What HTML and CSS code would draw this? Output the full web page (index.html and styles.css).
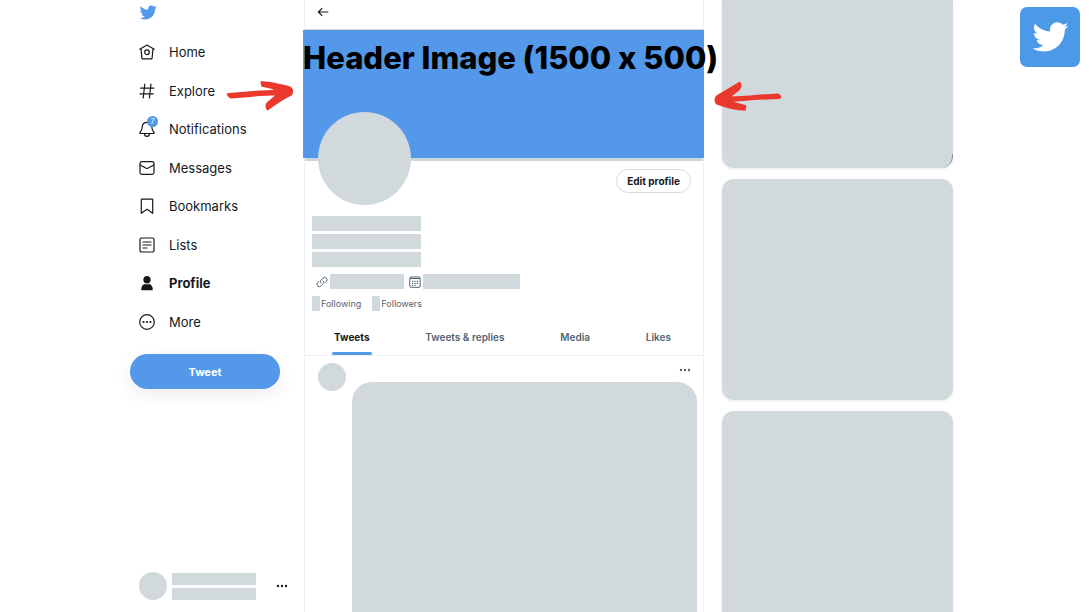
FILE: index.html
```html
<!DOCTYPE html>
<html lang="en">
<head>
<meta charset="utf-8">
<meta name="viewport" content="width=device-width, initial-scale=1">
<title>Profile header size guide</title>
<link rel="stylesheet" href="styles.css">
</head>
<body>
<svg class="defs" aria-hidden="true">
  <symbol id="bird" viewBox="0 2 24 20"><path d="M23.643 4.937c-.835.37-1.732.62-2.675.733.962-.576 1.7-1.49 2.048-2.578-.9.534-1.897.922-2.958 1.13-.85-.904-2.06-1.47-3.4-1.47-2.572 0-4.658 2.086-4.658 4.66 0 .364.042.718.12 1.06-3.873-.195-7.304-2.05-9.602-4.868-.4.69-.63 1.49-.63 2.342 0 1.616.823 3.043 2.072 3.878-.764-.025-1.482-.234-2.11-.583v.06c0 2.257 1.605 4.14 3.737 4.568-.392.106-.803.162-1.227.162-.3 0-.593-.028-.877-.082.593 1.85 2.313 3.198 4.352 3.234-1.595 1.25-3.604 1.995-5.786 1.995-.376 0-.747-.022-1.112-.065 2.062 1.323 4.51 2.093 7.14 2.093 8.57 0 13.255-7.098 13.255-13.254 0-.2-.005-.402-.014-.602.91-.658 1.7-1.477 2.323-2.41z"/></symbol>
  <symbol id="dots" viewBox="0 0 12 4"><circle cx="2" cy="2" r="1.2"/><circle cx="6" cy="2" r="1.2"/><circle cx="10" cy="2" r="1.2"/></symbol>
</svg>
<div class="page">
  <header class="sidebar">
    <a class="brand" href="#" aria-label="Twitter"><svg><use href="#bird"/></svg></a>
    <nav class="nav" aria-label="Primary">
      <a href="#"><svg viewBox="0 0 16 16"><path d="M.8 5.3 8 1.1l7.2 4.2M2 4.8l.9 9.3q.1.7.8.7h8.6q.7 0 .8-.7L14 4.8"/><circle cx="8" cy="8.2" r="2.3"/></svg>Home</a>
      <a href="#"><svg viewBox="0 0 16 16"><path d="M5.8 1 4.2 15M12 1l-1.6 14M1.6 5.1h13.2M1 10.9h13.2"/></svg>Explore</a>
      <a href="#"><span class="bell"><svg viewBox="0 0 16 16"><path d="M8 1.3c-2.8 0-4.6 1.9-4.8 4.7-.2 3-.7 4-1.9 5-.8.7-.5 1.500.4 1.500h12.600c.9 0 1.200-.8.4-1.500-1.200-1-1.700-2-1.900-5C12.600 3.200 10.800 1.300 8 1.300M5.500 12.700c0 1.600 1 2.600 2.500 2.600s2.500-1 2.500-2.600"/></svg><span class="badge">7</span></span>Notifications</a>
      <a href="#"><svg viewBox="0 0 16 16"><rect x="1" y="1.600" width="14" height="12.800" rx="1.800"/><path d="m1.200 5 6 3.300q.8.400 1.600 0l6-3.300"/></svg>Messages</a>
      <a href="#"><svg viewBox="0 0 16 16"><path d="M2.300 1.800q0-.6.6-.6h10.200q.6 0 .6.600v13.500L8 11.300l-5.700 4z"/></svg>Bookmarks</a>
      <a href="#"><svg viewBox="0 0 16 16"><rect x="1" y="1" width="14" height="14" rx="1.600"/><path d="M4 5h8M4 8h8M4 11h4"/></svg>Lists</a>
      <a href="#" class="current" aria-current="page"><svg viewBox="0 0 16 16"><path class="solid" d="M8 1c2.200 0 3.700 1.600 3.700 3.700S10.200 8.600 8 8.600 4.300 6.800 4.300 4.700 5.800 1 8 1M2.200 14.500c0-3.300 1.800-5.100 3.700-5.500q2.100.8 4.200 0c1.900.4 3.700 2.200 3.700 5.500q0 .7-.7.700H2.900q-.7 0-.7-.7"/></svg>Profile</a>
      <a href="#"><svg viewBox="0 0 16 16"><circle cx="8" cy="8" r="7.300"/><g class="solid"><circle cx="4.600" cy="8" r="1.100"/><circle cx="8" cy="8" r="1.100"/><circle cx="11.400" cy="8" r="1.100"/></g></svg>More</a>
    </nav>
    <button class="tweet-button" type="button">Tweet</button>
    <div class="account">
      <span class="account-photo"></span>
      <span class="account-lines"><span></span><span></span></span>
      <button class="dots-button" type="button" aria-label="Account menu"><svg><use href="#dots"/></svg></button>
    </div>
  </header>

  <main class="profile">
    <div class="topbar"><button class="back" type="button" aria-label="Back"><svg viewBox="0 0 12 10"><path d="M11.300 5H1.500M5.200 1.200 1.400 5l3.800 3.800"/></svg></button></div>
    <section class="banner">
      <h1>Header Image (1500 x 500)</h1>
      <svg class="arrow arrow-left" viewBox="0 0 68 30"><path d="M.500 13.200Q1 12.100 3 12L34 9.500q8-.2 14.500-1L36 5.800Q34.500 5 34.700 0 38 .2 46 1.200l16 3.500q4.600 1.500 5 4.300.4 2.700-1 5.200Q54 20 41.500 29.800q-1.700-2-2.100-4.600.2-2.600 1.600-4l8-6.600Q34 14.700 4.500 17.500 2.200 16.200.500 13.200"/></svg>
      <svg class="arrow arrow-right" viewBox="0 0 68 32"><path d="M67.500 16.200q-1 1.700-3 1.700L40 19l-20.500 1.800L32 24.200q.700 2.500-.7 5.600Q18 29 3 23.700.6 22.500.500 18q.5-2.800 3-4.300L17.500 5.500 25.800.6q1.700 2 1.800 4.500-.4 2.200-1.800 3.800L17.500 15.500 36 14.500q15-1.500 28.500-2 2.300 1.300 3 3.700"/></svg>
    </section>
    <section class="details">
      <div class="identity"><span class="photo"></span><button class="edit" type="button">Edit profile</button></div>
      <div class="bio"><span></span><span></span><span></span></div>
      <div class="meta">
        <svg viewBox="0 0 12 12"><path d="M5 7.200a2.200 2.200 0 0 1 0-3.100l2-2a2.300 2.300 0 0 1 3.300 3.300L9 6.700M7 4.800a2.200 2.200 0 0 1 0 3.100l-2 2A2.300 2.300 0 0 1 1.700 6.600L3 5.300"/></svg><span class="site"></span>
        <svg viewBox="0 0 12 12"><rect x=".8" y="1" width="10.400" height="10.300" rx="1.200"/><path d="M1 2.500h10"/><path class="grid" d="M3 5.300h1.200M5.400 5.300h1.200M7.800 5.300H9M3 7.300h1.200M5.400 7.300h1.200M7.800 7.300H9M3 9.300h1.200M5.400 9.300h1.200"/></svg><span class="joined"></span>
      </div>
      <div class="follow"><a href="#"><span></span>Following</a><a href="#"><span></span>Followers</a></div>
    </section>
    <nav class="tabs" aria-label="Profile timelines"><a href="#" class="active" aria-current="page">Tweets</a><a href="#">Tweets &amp; replies</a><a href="#">Media</a><a href="#">Likes</a></nav>
    <article class="post">
      <span class="post-photo"></span>
      <div class="post-body"><button class="dots-button" type="button" aria-label="Tweet menu"><svg><use href="#dots"/></svg></button><div class="media"></div></div>
    </article>
  </main>

  <aside class="rail"><div class="card first"></div><div class="card"></div><div class="card last"></div></aside>
</div>
<div class="corner-logo" role="img" aria-label="Twitter logo"><svg><use href="#bird"/></svg></div>
</body>
</html>
```
FILE: styles.css
```css
:root { --blue: #5398e9; --fill: #d1d9dc; --ink: #14191e; --muted: #536471; --line: #eff2f4; }
* { box-sizing: border-box; }
body { margin: 0; background: #fff; color: var(--ink); font-family: Inter, "Liberation Sans", sans-serif; }
a { color: inherit; text-decoration: none; }
button { font: inherit; color: inherit; border: 0; background: none; padding: 0; cursor: pointer; }
svg { display: block; flex: none; }
.defs { position: absolute; width: 0; height: 0; }
.page { display: grid; grid-template-columns: 174px minmax(0, 1fr) 249px; height: 100vh; padding: 0 139px 0 130px; overflow: hidden; }

.sidebar { display: flex; flex-direction: column; height: 100vh; padding: 4px 16px 12px 9px; }
.brand svg { width: 18px; height: 17px; fill: var(--blue); }
.nav { display: flex; flex-direction: column; justify-content: space-between; height: 294px; margin-top: 19px; flex: none; }
.nav a { display: flex; align-items: center; gap: 14px; height: 24px; font-size: 13px; font-weight: 400; }
.nav svg { width: 16px; height: 16px; fill: none; stroke: var(--ink); stroke-width: 1.2; stroke-linejoin: round; stroke-linecap: round; }
.nav .solid { fill: var(--ink); stroke: none; }
.nav .current { font-weight: 700; }
.bell { position: relative; }
.badge { position: absolute; top: -5px; right: -3px; width: 11px; height: 11px; border-radius: 50%; background: var(--blue); color: #fff; font-size: 7px; line-height: 11px; text-align: center; }
.tweet-button { flex: none; height: 35px; margin: 20px 8px 0 -9px; border-radius: 18px; background: var(--blue); color: #fff; font-size: 11px; font-weight: 700; box-shadow: 0 6px 18px rgb(0 0 0 / 7%); }
.account { display: flex; align-items: center; gap: 5px; margin-top: auto; }
.account-photo { width: 28px; height: 28px; border-radius: 50%; background: var(--fill); }
.account-lines { display: grid; gap: 3px; width: 84px; }
.account-lines span { height: 12px; background: var(--fill); }
.dots-button svg { width: 12px; height: 4px; fill: var(--ink); }
.account .dots-button { margin-left: auto; }

.profile { border: solid var(--line); border-width: 0 1px; }
.topbar { display: flex; align-items: center; height: 30px; padding: 0 12px 6px; border-bottom: 1px solid var(--fill); }
.back svg { width: 12px; height: 10px; fill: none; stroke: var(--ink); stroke-width: 1.2; }
.banner { position: relative; z-index: 1; height: 128px; margin: 0 -1px 0 -2px; background: var(--blue); }
.banner h1 { margin: 0; padding-top: 8px; color: #000; font-size: 31px; line-height: 40px; font-weight: 800; font-feature-settings: "calt" 0; white-space: nowrap; }
.arrow { position: absolute; top: 51px; width: 68px; fill: #eb382c; }
.arrow-left { right: 100%; height: 30px; margin-right: 9px; }
.arrow-right { left: 100%; height: 32px; margin-left: 10px; }
.details { padding: 0 12px 0 7px; border-top: 3px solid #cbd6df; }
.identity { display: flex; justify-content: space-between; align-items: flex-start; height: 55px; padding-left: 6px; }
.photo { position: relative; z-index: 2; width: 93px; height: 93px; margin-top: -49px; border-radius: 50%; background: var(--fill); }
.edit { height: 24px; margin-top: 8px; padding: 0 10px; border: 1px solid #d5dce0; border-radius: 12px; font-size: 10px; font-weight: 700; }
.bio { display: grid; gap: 3px; width: 109px; }
.bio span { height: 15px; background: var(--fill); }
.meta { display: flex; align-items: center; gap: 2px; margin-top: 7px; padding-left: 4px; }
.meta svg { width: 12px; height: 12px; fill: none; stroke: var(--muted); }
.meta .grid { stroke-width: 1.2; }
.meta span { height: 15px; background: var(--fill); }
.site { width: 74px; margin-right: 3px; }
.joined { width: 97px; }
.follow { display: flex; gap: 11px; margin-top: 7px; color: var(--muted); font-size: 9px; font-weight: 400; }
.follow a { display: flex; align-items: center; gap: 1px; }
.follow span { width: 8px; height: 15px; background: var(--fill); }
.tabs { display: flex; justify-content: space-between; height: 45px; padding: 0 30px 0 27px; border-bottom: 1px solid var(--line); color: var(--muted); font-size: 10px; font-weight: 600; }
.tabs a { display: flex; align-items: center; height: 44px; padding: 8px 2px 0; }
.tabs .active { position: relative; color: var(--ink); font-weight: 700; }
.tabs .active::after { content: ""; position: absolute; left: 0; right: 0; bottom: 0; height: 3px; border-radius: 2px; background: var(--blue); }
.post { display: flex; gap: 6px; padding: 7px 6px 0 13px; }
.post-photo { flex: none; width: 28px; height: 28px; border-radius: 50%; background: var(--fill); }
.post-body { display: flex; flex-direction: column; flex: 1; }
.post-body .dots-button { align-self: flex-end; margin: 5px 6px 10px 0; }
.post-body .dots-button svg { fill: var(--muted); }
.media { height: 400px; border-radius: 20px; background: var(--fill); }

.rail { display: grid; grid-template-rows: 168px 221px 221px; gap: 11px; margin-left: 18px; }
.card { border-radius: 12px; background: var(--fill); box-shadow: 0 1px 3px rgb(80 110 120 / 15%); }
.first { position: relative; border-radius: 0 0 12px 12px; }
.first::after { content: ""; position: absolute; right: 0; bottom: 0; width: 12px; height: 14px; border-right: 1px solid #8b9499; border-bottom-right-radius: 12px; }
.last { border-radius: 12px 12px 0 0; }
.corner-logo { position: absolute; top: 7px; right: 12px; display: grid; place-items: center; width: 60px; height: 60px; border-radius: 7px; background: #4c99e8; }
.corner-logo svg { width: 38px; height: 32px; fill: #fff; }
```
